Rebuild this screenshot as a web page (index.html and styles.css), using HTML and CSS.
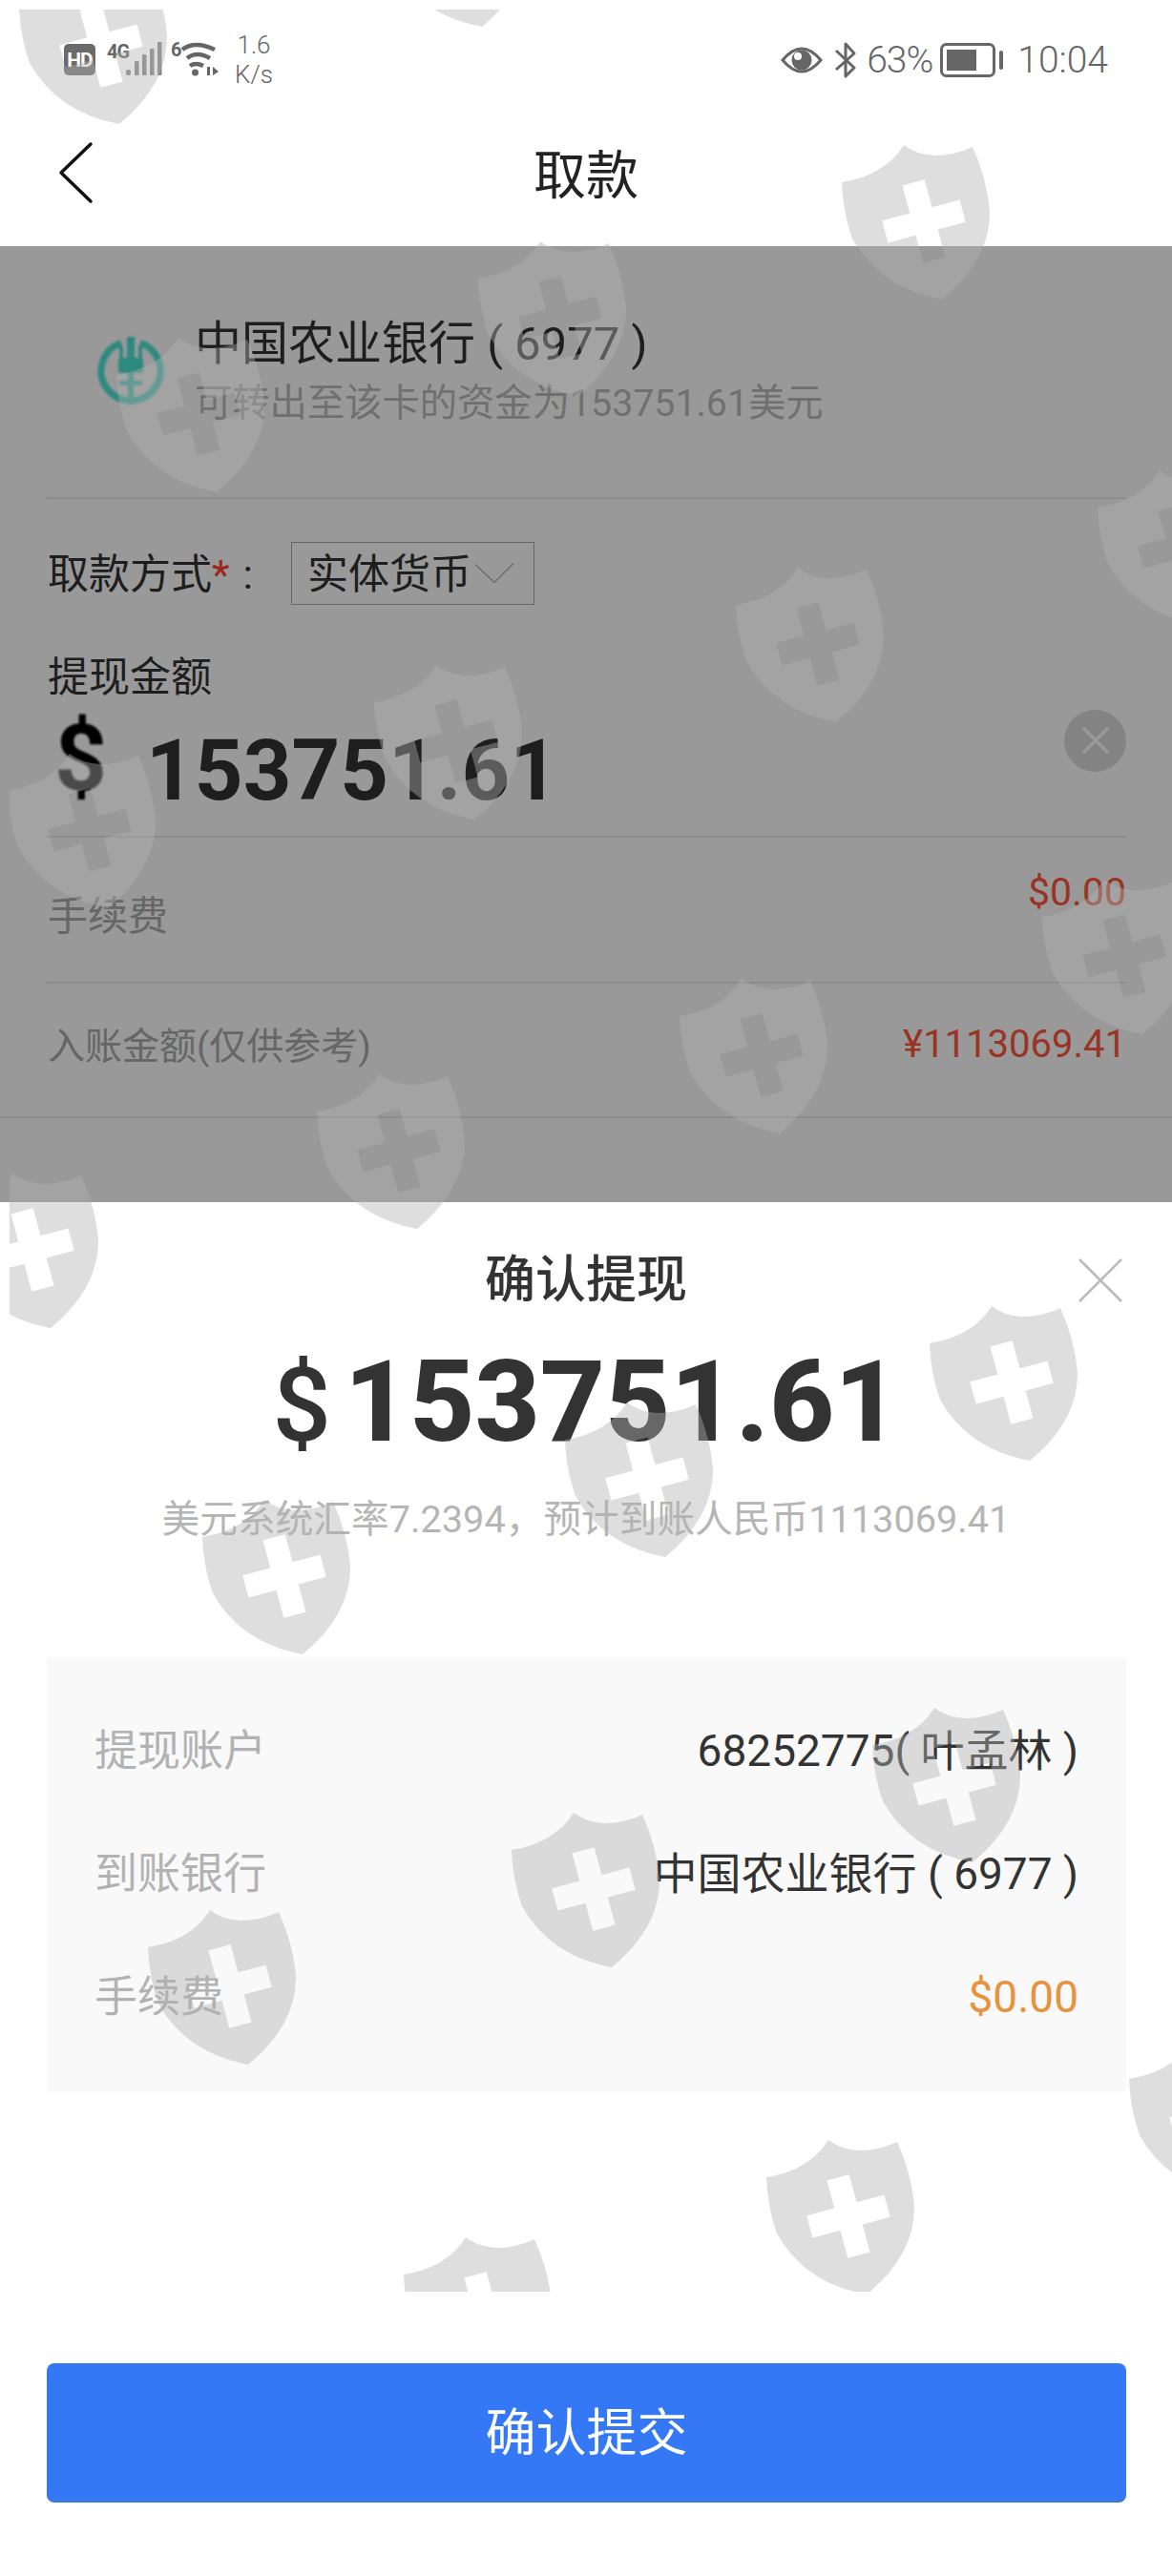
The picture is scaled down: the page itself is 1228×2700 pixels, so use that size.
FILE: index.html
```html
<!DOCTYPE html>
<html lang="zh-CN">
  <head>
    <meta charset="UTF-8" />
    <title>取款</title>
    <link rel="stylesheet" href="styles.css">
  </head>

  <body>
    <div class="page">
      <svg width="0" height="0" class="defs">
        <defs>
          <path id="shield" fill-rule="evenodd" d="M65 0Q78 10 97 11Q118 11 137 2Q152 35 155 69Q156 120 105 162Q40 150 11 98Q1 70 0 39Q45 32 65 0ZM63.5 42.5L86.7 36.3L94.5 65.3L123.5 57.5L129.7 80.7L100.7 88.5L108.5 117.5L85.3 123.7L77.5 94.7L48.5 102.5L42.3 79.3L71.3 71.5Z" />
        </defs>
      </svg>

      <header class="status">
        <div class="status-left">
          <span class="hd">HD</span>
          <svg class="network" width="120" height="40" viewBox="0 0 120 40">
            <text x="2" y="18" class="net-text">4G</text>
            <g fill="#858585">
              <rect x="22" y="30" width="5" height="6" rx="2" />
              <rect x="31" y="21" width="4.5" height="15" rx="1" />
              <rect x="39" y="14" width="4.5" height="22" rx="1" />
              <rect x="47" y="8" width="4.5" height="28" rx="1" />
              <rect x="55" y="1" width="4.5" height="35" rx="1" />
            </g>
            <text x="69" y="16" class="net-text">6</text>
            <g fill="none" stroke="#666" stroke-width="4.5">
              <path d="M81 9Q94 -1 115 9" />
              <path d="M86 18Q96 10 110 18" />
              <path d="M89 26Q95 22 103 26" />
            </g>
            <circle cx="94.500" cy="33" r="3.500" fill="#666" />
            <path d="M107 27V36H110V27ZM113 27L119 32L113 36Z" fill="#666" />
          </svg>
          <div class="speed">
            <span>1.6</span>
            <span>K/s</span>
          </div>
        </div>
        <div class="status-right">
          <svg class="eye" width="44" height="30" viewBox="0 0 44 30">
            <path d="M2 15Q22 -9 42 15Q22 39 2 15Z" fill="none" stroke="#666" stroke-width="3" />
            <circle cx="22" cy="15" r="10.500" fill="#666" />
            <circle cx="18" cy="11" r="4" fill="#fff" />
          </svg>
          <svg class="bluetooth" width="24" height="38" viewBox="0 0 24 38">
            <path d="M2 9L21 27L12 36V2L21 12L2 29" fill="none" stroke="#666" stroke-width="3" stroke-linejoin="round" />
          </svg>
          <span class="battery-text">63%</span>
          <svg class="battery" width="66" height="36" viewBox="0 0 66 36">
            <rect x="1.500" y="1.500" width="55" height="33" rx="5" fill="none" stroke="#666" stroke-width="3" />
            <rect x="7" y="7" width="31" height="22" fill="#666" />
            <rect x="62" y="8" width="4" height="20" rx="2" fill="#666" />
          </svg>
          <span class="time">10:04</span>
        </div>
      </header>

      <nav class="topbar">
        <svg class="back" width="38" height="66" viewBox="0 0 38 66">
          <path d="M34 3L3 33L34 63" fill="none" stroke="#111" stroke-width="3.500" stroke-linecap="round" stroke-linejoin="round" />
        </svg>
        <h1 class="topbar-title">取款</h1>
      </nav>

      <section class="form">
        <div class="bank">
          <svg class="bank-logo" width="72" height="72" viewBox="0 0 72 72">
            <path d="M26 6.500A31 31 0 1 0 46 6.500" fill="none" stroke="#4ee6d5" stroke-width="7" />
            <g fill="#4ee6d5">
              <rect x="32" y="0" width="8" height="24" />
              <rect x="24" y="10" width="4" height="14" />
              <rect x="44" y="10" width="4" height="14" />
              <rect x="23" y="22" width="26" height="16" rx="3" />
              <rect x="33" y="38" width="6" height="33" />
              <rect x="24" y="46" width="24" height="5" />
            </g>
          </svg>
          <div class="bank-info">
            <div class="bank-name">中国农业银行 ( 6977 )</div>
            <div class="bank-sub">可转出至该卡的资金为153751.61美元</div>
          </div>
        </div>

        <div class="method">
          <span class="method-label">取款方式<i class="req">*</i><b class="colon">:</b></span>
          <div class="select">
            <span>实体货币</span>
            <svg width="42" height="24" viewBox="0 0 44 24">
              <path d="M1 2L22 22L43 1" fill="none" stroke="#b4b4b4" stroke-width="1.500" />
            </svg>
          </div>
        </div>

        <div class="amount-label">提现金额</div>
        <div class="amount">
          <span class="amount-sign">$</span>
          <span class="amount-value">153751.61</span>
          <span class="clear">
            <svg width="30" height="30" viewBox="0 0 30 30">
              <path d="M2 2L28 28M28 2L2 28" stroke="#fff" stroke-width="3.500" />
            </svg>
          </span>
        </div>

        <div class="fee">
          <span class="fee-label">手续费</span>
          <span class="fee-value">$0.00</span>
        </div>

        <div class="credit">
          <span class="credit-label">入账金额(仅供参考)</span>
          <span class="credit-value">¥1113069.41</span>
        </div>
        <div class="form-end"></div>

        <div class="scrim"></div>
      </section>

      <section class="sheet">
        <div class="sheet-head">
          <span></span>
          <h2 class="sheet-title">确认提现</h2>
          <svg class="sheet-close" width="46" height="46" viewBox="0 0 46 46">
            <path d="M1 1L45 45M45 1L1 45" stroke="#bbb" stroke-width="2.500" />
          </svg>
        </div>
        <div class="total">
          <span class="total-sign">$</span>
          <span class="total-value">153751.61</span>
        </div>
        <p class="rate">美元系统汇率7.2394，预计到账人民币1113069.41</p>

        <div class="card">
          <div class="card-row">
            <span class="card-label">提现账户</span>
            <span class="card-value">68252775( 叶孟林 )</span>
          </div>
          <div class="card-row">
            <span class="card-label">到账银行</span>
            <span class="card-value">中国农业银行 ( 6977 )</span>
          </div>
          <div class="card-row">
            <span class="card-label">手续费</span>
            <span class="card-value card-value-fee">$0.00</span>
          </div>
        </div>

        <button class="submit">确认提交</button>
      </section>

      <svg class="watermark" width="1218" height="2392" viewBox="10 10 1218 2392">
        <use href="#shield" x="20" y="-32" />
        <use href="#shield" x="400" y="-134" />
        <use href="#shield" x="882" y="152" />
        <use href="#shield" x="501" y="253" />
        <use href="#shield" x="122" y="354" />
        <use href="#shield" x="1150" y="493" />
        <use href="#shield" x="771" y="595" />
        <use href="#shield" x="392" y="697" />
        <use href="#shield" x="8" y="790" />
        <use href="#shield" x="1092" y="922" />
        <use href="#shield" x="712" y="1026" />
        <use href="#shield" x="332" y="1126" />
        <use href="#shield" x="-52" y="1230" />
        <use href="#shield" x="974" y="1369" />
        <use href="#shield" x="592" y="1470" />
        <use href="#shield" x="212" y="1572" />
        <use href="#shield" x="914" y="1790" />
        <use href="#shield" x="536" y="1900" />
        <use href="#shield" x="155" y="2002" />
        <use href="#shield" x="1183" y="2140" />
        <use href="#shield" x="803" y="2243" />
        <use href="#shield" x="423" y="2345" />
      </svg>
    </div>
  </body>
</html>
```

FILE: styles.css
```css
* {
  box-sizing: border-box;
}

html,
body {
  margin: 0;
  padding: 0;
}

body {
  font-family: Roboto, "Noto Sans CJK SC", sans-serif;
  color: #333;
  background: #fff;
}

.page {
  position: relative;
  width: 1228px;
  height: 2700px;
  overflow: hidden;
  background: #fff;
}

.defs {
  position: absolute;
}

/* status bar */
.status {
  display: flex;
  justify-content: space-between;
  align-items: center;
  height: 110px;
  padding: 15px 67px 0 67px;
  color: #666;
}

.status-left,
.status-right {
  display: flex;
  align-items: center;
}

.hd {
  display: flex;
  justify-content: center;
  align-items: center;
  width: 33px;
  height: 33px;
  border-radius: 5px;
  background: #6b6b6b;
  color: #fff;
  font-size: 21px;
  font-weight: 700;
  letter-spacing: -1px;
}

.network {
  margin-left: 10px;
  overflow: visible;
}

.net-text {
  font-family: Roboto, sans-serif;
  font-size: 20px;
  font-weight: 700;
  fill: #666;
  letter-spacing: -1px;
}

.speed {
  display: flex;
  flex-direction: column;
  align-items: center;
  width: 40px;
  margin-left: 16px;
  font-size: 26px;
  font-weight: 300;
  line-height: 31px;
}

.bluetooth {
  margin-left: 12px;
}

.battery-text {
  margin-left: 10px;
  font-size: 39px;
  font-weight: 300;
  letter-spacing: -1px;
}

.battery {
  margin-left: 8px;
}

.time {
  margin-left: 15px;
  font-size: 39px;
  font-weight: 300;
}

/* title */
.topbar {
  position: relative;
  display: flex;
  justify-content: center;
  align-items: center;
  height: 148px;
}

.back {
  position: absolute;
  left: 61px;
  top: 38px;
}

.topbar-title {
  margin: 0;
  font-size: 55px;
  font-weight: 400;
  line-height: 70px;
  color: #222;
}

/* form behind the sheet */
.form {
  position: relative;
  height: 1002px;
  padding: 0 48px 0 49px;
  background: #fff;
}

.bank {
  display: flex;
  align-items: flex-start;
  height: 265px;
  padding: 73px 0 0 52px;
  border-bottom: 2px solid #eaeaea;
}

.bank-logo {
  margin-top: 22px;
  flex: none;
  filter: blur(0.8px);
}

.bank-info {
  margin-left: 31px;
}

.bank-name {
  font-size: 49px;
  line-height: 60px;
}

.bank-sub {
  margin-top: 7px;
  font-size: 39.3px;
  line-height: 50px;
  color: #bbb;
}

.method {
  display: flex;
  align-items: center;
  height: 66px;
  margin-top: 45px;
  padding-left: 1px;
  font-size: 43px;
}

.method-label {
  padding-bottom: 6px;
}

.req {
  font-style: normal;
  color: #ff4030;
}

.colon {
  margin-left: 14px;
  font-weight: 400;
}

.select {
  display: flex;
  align-items: center;
  justify-content: space-between;
  width: 255px;
  height: 66px;
  margin-left: 40px;
  padding: 0 20px 0 16px;
  border: 1px solid #aaa;
  white-space: nowrap;
}

.select span {
  padding-bottom: 6px;
}

.select svg {
  flex: none;
}

.amount-label {
  margin-top: 46px;
  padding-left: 1px;
  font-size: 43px;
  line-height: 60px;
}

.amount {
  display: flex;
  align-items: center;
  height: 138px;
  padding-left: 8px;
  border-bottom: 2px solid #eaeaea;
}

.amount-sign {
  margin-top: -26px;
  font-size: 96px;
  font-weight: 700;
  line-height: 100px;
  color: #000;
  filter: blur(1px);
}

.amount-value {
  margin-left: 41px;
  font-size: 88.5px;
  font-weight: 700;
  line-height: 100px;
}

.clear {
  display: flex;
  justify-content: center;
  align-items: center;
  width: 65px;
  height: 65px;
  margin: -64px 0 0 auto;
  border-radius: 50%;
  background: #ddd;
}

.fee {
  display: flex;
  justify-content: space-between;
  align-items: flex-start;
  height: 153px;
  padding: 32px 0 0 1px;
  border-bottom: 2px solid #eaeaea;
}

.fee-label {
  margin-top: 21px;
  font-size: 42px;
  line-height: 60px;
  color: #aaa;
}

.fee-value {
  font-size: 41px;
  line-height: 50px;
  color: #ff573c;
}

.credit {
  display: flex;
  justify-content: space-between;
  align-items: center;
  height: 139px;
  padding: 0 0 15px 1px;
}

.credit-label {
  font-size: 39px;
  color: #aaa;
}

.credit-value {
  margin-top: 3px;
  font-size: 40px;
  color: #ff573c;
}

.form-end {
  margin: 0 -48px 0 -49px;
  border-top: 2px solid #eaeaea;
}

.scrim {
  position: absolute;
  top: 0;
  right: 0;
  bottom: 0;
  left: 0;
  background: rgba(0, 0, 0, 0.4);
}

/* confirm sheet */
.sheet {
  padding-top: 47px;
  background: #fff;
}

.sheet-head {
  display: grid;
  grid-template-columns: 1fr auto 1fr;
  align-items: center;
}

.sheet-title {
  margin: 0;
  font-size: 53px;
  font-weight: 500;
  line-height: 70px;
  color: #333;
}

.sheet-close {
  justify-self: end;
  margin-right: 52px;
}

.total {
  display: flex;
  justify-content: center;
  align-items: baseline;
  height: 140px;
  margin-top: 23px;
}

.total-sign {
  font-size: 108px;
  font-weight: 500;
  line-height: 140px;
}

.total-value {
  margin-left: 14px;
  font-size: 118.5px;
  font-weight: 800;
  line-height: 140px;
}

.rate {
  margin: 28px 0 0;
  font-size: 39.7px;
  line-height: 50px;
  text-align: center;
  color: #b5b5b5;
}

.card {
  height: 456px;
  margin: 119px 48px 0 49px;
  padding: 68px 50px 0;
  background: #f9f9f9;
}

.card-row {
  display: flex;
  justify-content: space-between;
  height: 129px;
  font-size: 46px;
  line-height: 60px;
}

.card-label {
  padding-top: 1px;
  font-size: 45px;
  color: #b2b2b2;
}

.card-value-fee {
  color: #e8923d;
}

.submit {
  display: block;
  width: 1131px;
  height: 146px;
  margin: 284px 48px 0 49px;
  padding: 0 0 6px;
  border: 0;
  border-bottom: 2px solid #3b78d0;
  border-radius: 8px;
  background: #3478f6;
  color: #fff;
  font-family: Roboto, "Noto Sans CJK SC", sans-serif;
  font-size: 53px;
}

/* watermark sits over everything except the bottom strip */
.watermark {
  position: absolute;
  top: 10px;
  left: 10px;
  fill: rgba(177, 177, 177, 0.42);
  pointer-events: none;
}
```
